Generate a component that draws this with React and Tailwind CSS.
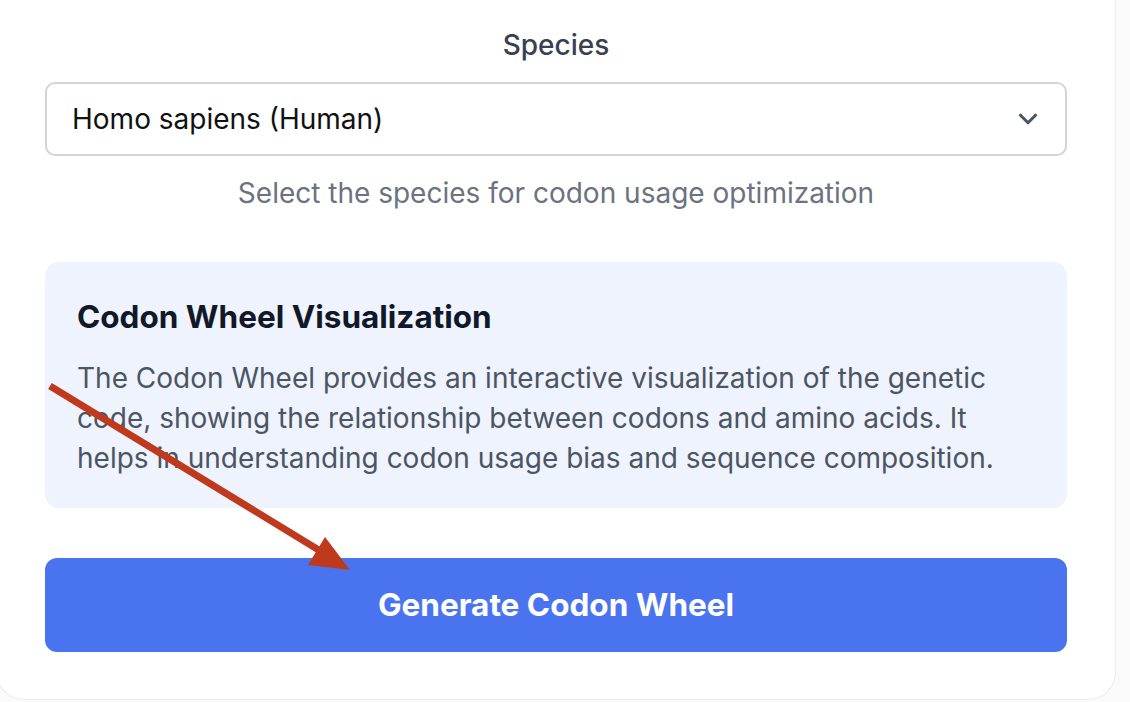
import React, { useState } from 'react';
import { ChevronDown } from 'lucide-react';

const font = { fontFamily: 'Inter, "Noto Sans", sans-serif' };

const Arrow = () => (
    <svg className="absolute left-0 top-0 pointer-events-none" width="1130" height="702" viewBox="0 0 1130 702">
        <line x1="50" y1="386" x2="322" y2="552" stroke="#bf391d" strokeWidth="7" strokeLinecap="butt" />
        <polygon points="350,570 325,537 308,565" fill="#bf391d" />
    </svg>
);

const App = () => {
    const [species, setSpecies] = useState('Homo sapiens (Human)');

    return (
        <div className="relative h-[702px] w-[1130px] overflow-hidden bg-[#fafafa]" style={font}>
            <div className="-ml-[4px] w-[1120px] rounded-b-[28px] border border-t-0 border-[#ececec] bg-white px-[48px] pt-[29px] pb-[47px]">
                <label className="block text-center text-[28px] leading-[32px] font-medium text-[#374151]">Species</label>
                <div className="mt-[21px] flex h-[74px] items-center justify-between rounded-[10px] border-2 border-[#d1d5db] bg-white pl-[25px] pr-[22px]">
                    <span className="text-[28px] text-[#111111]">{species}</span>
                    <ChevronDown size={30} strokeWidth={2.5} className="text-[#4b5563]" onClick={() => setSpecies(species)} />
                </div>
                <p className="mt-[19px] text-center text-[28px] leading-[36px] text-[#6b7280]">
                    Select the species for codon usage optimization
                </p>

                <div className="mt-[51px] rounded-[14px] bg-[#eef3fd] px-[32px] pt-[35px] pb-[30px]">
                    <h3 className="text-[31.5px] leading-[40px] font-bold text-[#111827]">Codon Wheel Visualization</h3>
                    <p className="mt-[21px] max-w-[940px] text-[28px] leading-[40px] text-[#4b5563]">
                        The Codon Wheel provides an interactive visualization of the genetic code, showing the relationship between codons and amino acids. It helps in understanding codon usage bias and sequence composition.
                    </p>
                </div>

                <button className="mt-[50px] flex h-[94px] w-full items-center justify-center rounded-[12px] bg-[#4a74ef] text-[31.5px] font-bold text-white">
                    Generate Codon Wheel
                </button>
            </div>
            <Arrow />
        </div>
    );
};

export default App;
